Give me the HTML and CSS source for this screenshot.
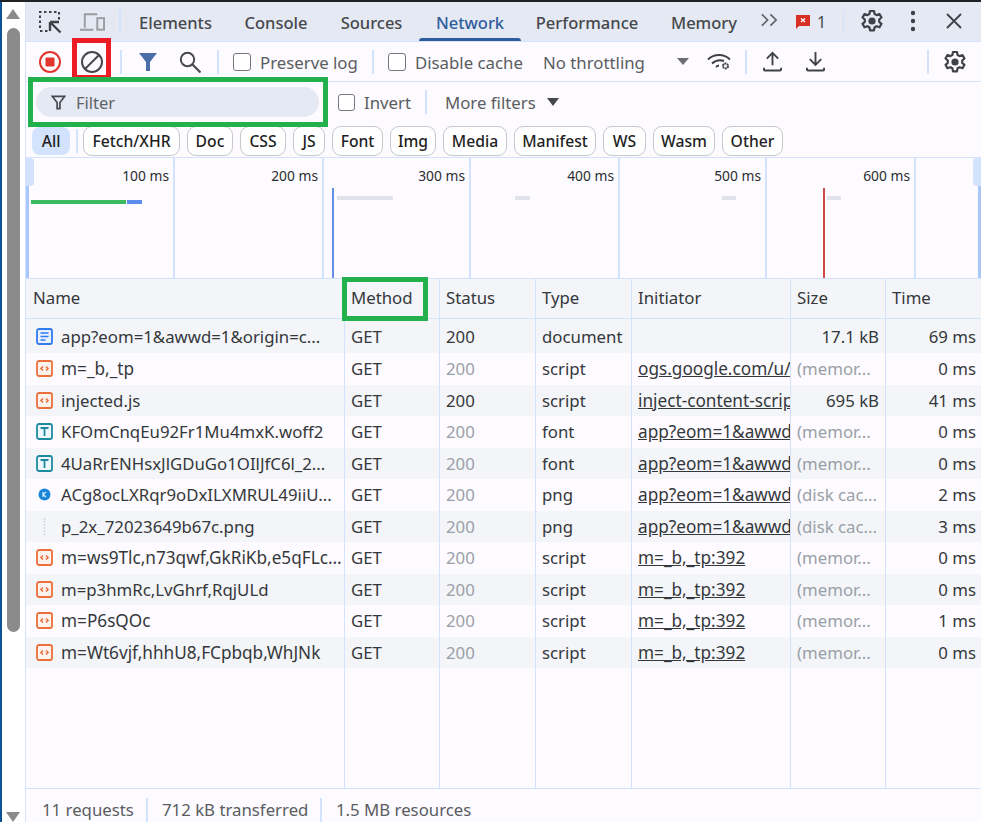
FILE: index.html
```html
<!DOCTYPE html>
<html lang="en">
<head>
<meta charset="utf-8">
<title>DevTools Network</title>
<link rel="stylesheet" href="styles.css">
</head>
<body>
<svg class="defs" width="0" height="0">
  <symbol id="gear" viewBox="0 0 24 24"><path fill="none" stroke="currentColor" stroke-width="2.2" stroke-linejoin="round" d="M10 2h4l.6 3 2 1.1 2.9-1 2 3.4-2.3 2v2.3l2.3 2-2 3.4-2.9-1-2 1.100-.6 3h-4l-.6-3-2-1.100-2.900 1-2-3.400 2.300-2v-2.300l-2.300-2 2-3.400 2.900 1 2-1.100z"/><circle cx="12" cy="12" r="3.600" fill="currentColor"/></symbol>
  <symbol id="script" viewBox="0 0 17 17"><rect x="1" y="1" width="15" height="15" rx="2" fill="#fdf3ee" stroke="#ea6f3a" stroke-width="1.800"/><path fill="none" stroke="#ea6f3a" stroke-width="1.600" d="M7 6.500 5 8.500l2 2M10 6.500l2 2-2 2"/></symbol>
  <symbol id="font" viewBox="0 0 17 17"><rect x="1" y="1" width="15" height="15" rx="2" fill="#eef8fa" stroke="#1d8aa0" stroke-width="1.800"/><path fill="none" stroke="#1d8aa0" stroke-width="1.800" d="M4.500 5h8M8.500 5v8"/></symbol>
</svg>
<div class="app">
  <aside class="rail">
    <span class="arrow-up"></span>
    <span class="thumb"></span>
    <span class="arrow-down"></span>
  </aside>
  <main class="panel">
    <nav class="tabbar">
      <svg class="ic ic-inspect" viewBox="0 0 24 24"><path fill="none" stroke="#3f4246" stroke-width="2" stroke-dasharray="2.500 2.500" d="M2 18V2h19v8M2 21h8"/><path fill="none" stroke="#3f4246" stroke-width="2.400" d="M12 12h9M12 12v9M12.500 12.500l10 10"/></svg>
      <svg class="ic ic-device" viewBox="0 0 26 20"><path fill="none" stroke="#9a9c9f" stroke-width="2" d="M5 16V2h13M0 18h14"/><rect x="18" y="6" width="7" height="12" fill="none" stroke="#9a9c9f" stroke-width="2"/></svg>
      <span class="sep sep-tab"></span>
      <a class="tab tab-el">Elements</a>
      <a class="tab tab-co">Console</a>
      <a class="tab tab-so">Sources</a>
      <a class="tab tab-net">Network</a>
      <a class="tab tab-pe">Performance</a>
      <a class="tab tab-me">Memory</a>
      <svg class="ic ic-more" viewBox="0 0 20 14"><path fill="none" stroke="#5f6368" stroke-width="1.800" d="m2 1 6 6-6 6M11 1l6 6-6 6"/></svg>
      <svg class="ic ic-err" viewBox="0 0 16 16"><path fill="#d93025" d="M1 1h14v11H4l-3 3z"/><path stroke="#fff" stroke-width="1.300" d="m6 4.500 4 3.500m0-3.500L6 8"/></svg>
      <span class="err-count">1</span>
      <span class="sep sep-err"></span>
      <svg class="ic ic-gear1"><use href="#gear"/></svg>
      <svg class="ic ic-dots" viewBox="0 0 6 22"><circle cx="3" cy="3" r="2.200" fill="#3f4246"/><circle cx="3" cy="11" r="2.200" fill="#3f4246"/><circle cx="3" cy="19" r="2.200" fill="#3f4246"/></svg>
      <svg class="ic ic-close" viewBox="0 0 16 16"><path stroke="#3f4246" stroke-width="1.800" d="m1 1 14 14M15 1 1 15"/></svg>
    </nav>
    <div class="toolbar">
      <svg class="ic ic-rec" viewBox="0 0 22 22"><circle cx="11" cy="11" r="10" fill="none" stroke="#e2352d" stroke-width="2"/><rect x="6.500" y="6.500" width="9" height="9" rx="1" fill="#e2352d"/></svg>
      <svg class="ic ic-clear" viewBox="0 0 22 22"><circle cx="11" cy="11" r="10" fill="none" stroke="#46484c" stroke-width="2"/><path stroke="#46484c" stroke-width="2" d="M18 4 4 18"/></svg>
      <span class="sep sep-a"></span>
      <svg class="ic ic-funnel" viewBox="0 0 20 20"><path fill="#4b6ea8" d="M1 1h18l-7 9v9H8v-9z"/></svg>
      <svg class="ic ic-search" viewBox="0 0 22 22"><circle cx="8.500" cy="8.500" r="6.700" fill="none" stroke="#46484c" stroke-width="2"/><path stroke="#46484c" stroke-width="2.200" d="m13.500 13.500 8 8"/></svg>
      <span class="sep sep-b"></span>
      <span class="check check-pl"></span>
      <span class="lbl lbl-pl">Preserve log</span>
      <span class="sep sep-c"></span>
      <span class="check check-dc"></span>
      <span class="lbl lbl-dc">Disable cache</span>
      <span class="lbl lbl-nt">No throttling</span>
      <span class="tri tri-grey"></span>
      <svg class="ic ic-wifi" viewBox="0 0 24 18"><path fill="none" stroke="#3f4246" stroke-width="2" d="M1 6.500C7 .5 17 .5 23 6.500M5 10.500c3-3 8-4 12-2.500M9 14c1-1 2-1.500 3-1.500"/><circle cx="18.500" cy="13" r="2.500" fill="none" stroke="#3f4246" stroke-width="2" stroke-dasharray="2 .6"/></svg>
      <span class="sep sep-d"></span>
      <svg class="ic ic-up" viewBox="0 0 20 22"><path fill="none" stroke="#3f4246" stroke-width="2" d="M10 15V2M4 8l6-6 6 6M1 17.500v2a1 1 0 0 0 1 1h16a1 1 0 0 0 1-1v-2"/></svg>
      <svg class="ic ic-down" viewBox="0 0 20 22"><path fill="none" stroke="#3f4246" stroke-width="2" d="M10 1v13M4 8.500l6 6 6-6M1 17.500v2a1 1 0 0 0 1 1h16a1 1 0 0 0 1-1v-2"/></svg>
      <span class="sep sep-e"></span>
      <svg class="ic ic-gear2"><use href="#gear"/></svg>
    </div>
    <div class="filterbar">
      <div class="filterbox">
        <svg class="ic ic-ffunnel" viewBox="0 0 16 16"><path fill="none" stroke="#46484c" stroke-width="1.800" d="M1.500 1.500h13L9.500 8v6.500h-3V8z"/></svg>
        <span class="placeholder">Filter</span>
      </div>
      <span class="check check-inv"></span>
      <span class="lbl lbl-inv">Invert</span>
      <span class="sep sep-f"></span>
      <span class="lbl lbl-mf">More filters</span>
      <span class="tri tri-dark"></span>
    </div>
    <div class="chips">
      <span class="chip chip-all">All</span>
      <span class="sep sep-chip"></span>
      <span class="chip w-97">Fetch/XHR</span>
      <span class="chip w-46">Doc</span>
      <span class="chip w-46">CSS</span>
      <span class="chip w-32">JS</span>
      <span class="chip w-51">Font</span>
      <span class="chip w-46">Img</span>
      <span class="chip w-64">Media</span>
      <span class="chip w-82">Manifest</span>
      <span class="chip w-43">WS</span>
      <span class="chip w-62">Wasm</span>
      <span class="chip w-61">Other</span>
    </div>
    <section class="overview">
      <div class="ov-col"><span>100 ms</span></div>
      <div class="ov-col"><span>200 ms</span></div>
      <div class="ov-col"><span>300 ms</span></div>
      <div class="ov-col"><span>400 ms</span></div>
      <div class="ov-col"><span>500 ms</span></div>
      <div class="ov-col"><span>600 ms</span></div>
      <i class="mark bar-green"></i>
      <i class="mark bar-blue"></i>
      <i class="mark dash d1"></i>
      <i class="mark dash d2"></i>
      <i class="mark dash d3"></i>
      <i class="mark dash d4"></i>
      <i class="mark line-blue"></i>
      <i class="mark line-red"></i>
      <i class="mark edge edge-l"></i>
      <i class="mark edge edge-r"></i>
      <i class="mark handle handle-l"></i>
      <i class="mark handle handle-r"></i>
    </section>
    <section class="table">
      <div class="row head"><div>Name</div><div>Method</div><div>Status</div><div>Type</div><div>Initiator</div><div>Size</div><div>Time</div></div>
      <div class="row first alt"><div class="name"><svg class="ri" viewBox="0 0 17 17"><rect x="1" y="1" width="15" height="15" rx="2" fill="#e8f0fe" stroke="#2f7bf0" stroke-width="1.800"/><path stroke="#2f7bf0" stroke-width="1.500" d="M4.500 5h8M4.500 8.500h8M4.500 12h5"/></svg>app?eom=1&amp;awwd=1&amp;origin=c...</div><div>GET</div><div>200</div><div>document</div><div></div><div class="num">17.1 kB</div><div class="num">69 ms</div></div>
      <div class="row"><div class="name wide"><svg class="ri"><use href="#script"/></svg>m=_b,_tp</div><div>GET</div><div class="mute">200</div><div>script</div><div class="link">ogs.google.com/u/0</div><div class="mute">(memor...</div><div class="num">0 ms</div></div>
      <div class="row alt"><div class="name"><svg class="ri"><use href="#script"/></svg>injected.js</div><div>GET</div><div>200</div><div>script</div><div class="link">inject-content-script</div><div class="num">695 kB</div><div class="num">41 ms</div></div>
      <div class="row"><div class="name"><svg class="ri"><use href="#font"/></svg>KFOmCnqEu92Fr1Mu4mxK.woff2</div><div>GET</div><div class="mute">200</div><div>font</div><div class="link">app?eom=1&amp;awwd</div><div class="mute">(memor...</div><div class="num">0 ms</div></div>
      <div class="row alt"><div class="name"><svg class="ri"><use href="#font"/></svg>4UaRrENHsxJlGDuGo1OIlJfC6l_2...</div><div>GET</div><div class="mute">200</div><div>font</div><div class="link">app?eom=1&amp;awwd</div><div class="mute">(memor...</div><div class="num">0 ms</div></div>
      <div class="row"><div class="name"><svg class="ri" viewBox="0 0 17 17"><circle cx="8.500" cy="8.500" r="6" fill="#1a86d8"/><path fill="none" stroke="#dcefff" stroke-width="1.200" d="M7 6v5M10 6 7 8.500l3 2.500"/></svg>ACg8ocLXRqr9oDxILXMRUL49iiU...</div><div>GET</div><div class="mute">200</div><div>png</div><div class="link">app?eom=1&amp;awwd</div><div class="mute">(disk cac...</div><div class="num">2 ms</div></div>
      <div class="row alt"><div class="name"><svg class="ri" viewBox="0 0 17 17"><path stroke="#d5d8e4" stroke-width="1.500" stroke-dasharray="2 1" d="M8.500 0v18"/></svg>p_2x_72023649b67c.png</div><div>GET</div><div class="mute">200</div><div>png</div><div class="link">app?eom=1&amp;awwd</div><div class="mute">(disk cac...</div><div class="num">3 ms</div></div>
      <div class="row"><div class="name wide"><svg class="ri"><use href="#script"/></svg>m=ws9Tlc,n73qwf,GkRiKb,e5qFLc...</div><div>GET</div><div class="mute">200</div><div>script</div><div class="link">m=_b,_tp:392</div><div class="mute">(memor...</div><div class="num">0 ms</div></div>
      <div class="row alt"><div class="name"><svg class="ri"><use href="#script"/></svg>m=p3hmRc,LvGhrf,RqjULd</div><div>GET</div><div class="mute">200</div><div>script</div><div class="link">m=_b,_tp:392</div><div class="mute">(memor...</div><div class="num">0 ms</div></div>
      <div class="row"><div class="name wide"><svg class="ri"><use href="#script"/></svg>m=P6sQOc</div><div>GET</div><div class="mute">200</div><div>script</div><div class="link">m=_b,_tp:392</div><div class="mute">(memor...</div><div class="num">1 ms</div></div>
      <div class="row alt"><div class="name wide"><svg class="ri"><use href="#script"/></svg>m=Wt6vjf,hhhU8,FCpbqb,WhJNk</div><div>GET</div><div class="mute">200</div><div>script</div><div class="link">m=_b,_tp:392</div><div class="mute">(memor...</div><div class="num">0 ms</div></div>
      <div class="row filler"><div></div><div></div><div></div><div></div><div></div><div></div><div></div></div>
    </section>
    <footer class="status">
      <span class="st st-a">11 requests</span>
      <span class="sep st-sep"></span>
      <span class="st st-b">712 kB transferred</span>
      <span class="sep st-sep"></span>
      <span class="st">1.5 MB resources</span>
    </footer>
  </main>
</div>
<span class="note note-red"></span>
<span class="note note-filter"></span>
<span class="note note-method"></span>
</body>
</html>
```
FILE: styles.css
```css
* { box-sizing: border-box; }
html, body { margin: 0; height: 100%; }
body {
  position: relative;
  width: 981px;
  height: 822px;
  overflow: hidden;
  background: #fdfbff;
  font-family: "Noto Sans", "Open Sans", sans-serif;
  font-size: 16.8px;
  color: #35383b;
  border-top: 2px solid #202124;
}
.defs { position: absolute; }
.app { display: flex; height: 820px; }
.rail {
  position: relative;
  flex: 0 0 26px;
  background: #fff;
  border-left: 2px solid #0f5299;
  border-right: 1px solid #d3e3fd;
}
.thumb { position: absolute; left: 5px; top: 26px; width: 13px; height: 604px; background: #8b8b8b; border-radius: 7px; }
.arrow-up, .arrow-down { position: absolute; left: 4px; width: 0; height: 0; border-left: 7.500px solid transparent; border-right: 7.500px solid transparent; }
.arrow-up { top: 7px; border-bottom: 10px solid #8b8b8b; }
.arrow-down { top: 810px; border-top: 10px solid #8b8b8b; }

.panel { flex: 1; min-width: 0; display: flex; flex-direction: column; }
.ic { display: block; flex: none; }
.sep { display: block; flex: none; width: 2px; height: 24px; background: #d3e3fd; }

/* Tabs */
.tabbar { display: flex; align-items: center; height: 40px; background: #e5e9f3; border-bottom: 1px solid #d3e3fd; flex: none; }
.ic-inspect { width: 24px; height: 24px; margin-left: 12px; }
.ic-device { width: 25px; height: 20px; margin-left: 18px; }
.sep-tab { margin-left: 14px; margin-right: 2px; }
.tab { display: flex; align-items: center; justify-content: center; height: 39px; padding-top: 2px; font-weight: 500; font-size: 16.500px; color: #45484c; white-space: nowrap; }
.tab-el { width: 105px; }
.tab-co { width: 96px; }
.tab-so { width: 95px; }
.tab-net { width: 102px; color: #2f5c9e; position: relative; }
.tab-net::after { content: ""; position: absolute; left: 0; right: 0; bottom: 0; height: 3px; background: #2f5c9e; border-radius: 3px 3px 0 0; }
.tab-pe { width: 132px; }
.tab-me { width: 102px; }
.ic-more { width: 19px; height: 14px; margin-left: 5px; margin-top: -3px; }
.ic-err { width: 16px; height: 16px; margin-left: 16px; }
.err-count { margin-left: 6px; width: 10px; font-size: 16px; color: #45484c; }
.sep-err { width: 1px; height: 24px; margin-left: 16px; }
.ic-gear1 { width: 24px; height: 24px; margin-left: 16px; color: #3f4246; margin-top: -2px; }
.ic-dots { width: 6px; height: 22px; margin-left: 26px; margin-top: -2px; }
.ic-close { width: 16px; height: 16px; margin-left: 30px; margin-top: -2px; }

/* Toolbar */
.toolbar { display: flex; align-items: center; height: 40px; border-bottom: 1px solid #d3e3fd; flex: none; }
.toolbar .lbl { padding-top: 2px; }
.ic-rec { width: 22px; height: 22px; margin-left: 13px; }
.ic-clear { width: 22px; height: 22px; margin-left: 20px; }
.sep-a { margin-left: 17px; }
.ic-funnel { width: 20px; height: 20px; margin-left: 16px; }
.ic-search { width: 22px; height: 22px; margin-left: 21px; }
.sep-b { margin-left: 16px; }
.check { display: block; flex: none; width: 18px; height: 18px; border: 1.500px solid #74777b; border-radius: 3px; background: #fff; }
.check-pl { margin-left: 14px; }
.lbl { flex: none; color: #5a5d61; white-space: nowrap; }
.lbl-pl { width: 97px; margin-left: 9px; }
.sep-c { margin-left: 15px; }
.check-dc { margin-left: 14px; }
.lbl-dc { width: 108px; margin-left: 9px; }
.lbl-nt { width: 103px; margin-left: 20px; }
.tri { display: block; flex: none; width: 0; height: 0; border-left: 6px solid transparent; border-right: 6px solid transparent; }
.tri-grey { border-top: 7px solid #6b6e72; margin-left: 31px; }
.ic-wifi { width: 24px; height: 18px; margin-left: 18px; }
.sep-d { margin-left: 14px; }
.ic-up { width: 19px; height: 21px; margin-left: 16px; }
.ic-down { width: 19px; height: 21px; margin-left: 24px; }
.sep-e { margin-left: 102px; }
.ic-gear2 { width: 24px; height: 24px; margin-left: 14px; color: #3f4246; }

/* Filter */
.filterbar { display: flex; align-items: center; height: 43px; padding-bottom: 3px; flex: none; }
.filterbox { display: flex; align-items: center; width: 283px; height: 30px; margin-left: 10px; background: #e5e9f3; border-radius: 15px; }
.ic-ffunnel { width: 15px; height: 15px; margin-left: 15px; }
.placeholder { margin-left: 10px; font-size: 16.500px; color: #5f6368; }
.check-inv { width: 17px; height: 17px; margin-left: 19px; }
.lbl-inv { width: 45px; margin-left: 9px; }
.sep-f { margin-left: 16px; }
.lbl-mf { width: 92px; margin-left: 18px; }
.tri-dark { border-top: 8px solid #45484c; margin-left: 10px; }

/* Chips */
.chips { display: flex; align-items: center; gap: 7px; height: 33px; flex: none; padding-left: 6px; border-bottom: 1px solid #d3e3fd; font-size: 15.700px; font-weight: 500; color: #1f1f1f; }
.chip { flex: none; display: flex; align-items: center; justify-content: center; height: 30px; border: 1px solid #c6c8cc; border-radius: 9px; background: #fff; white-space: nowrap; }
.chip-all { width: 38px; height: 28px; background: #d3e3fd; border: 0; border-radius: 8px; }
.sep-chip { height: 24px; margin: 0 -2px 0 -1px; }
.w-97 { width: 97px; } .w-46 { width: 46px; } .w-32 { width: 32px; } .w-51 { width: 51px; }
.w-64 { width: 64px; } .w-82 { width: 82px; } .w-43 { width: 43px; }
.w-62 { width: 62px; } .w-61 { width: 61px; }

/* Overview */
.overview { position: relative; display: grid; grid-template-columns: 149px 149px 147px 149px 147px 149px; height: 120px; flex: none; font-size: 13.800px; color: #2b2d30; }
.ov-col { border-right: 2px solid #d3e3fd; padding: 8px 4px 0 0; text-align: right; }
.mark { position: absolute; display: block; }
.bar-green { left: 5px; top: 42px; width: 95px; height: 4px; background: #3cba5f; }
.bar-blue { left: 101px; top: 42px; width: 15px; height: 4px; background: #5b8def; }
.dash { top: 38px; height: 3.500px; background: #e0e3ea; }
.d1 { left: 311px; width: 56px; }
.d2 { left: 489px; width: 15px; }
.d3 { left: 696px; width: 14px; }
.d4 { left: 801px; width: 14px; }
.line-blue { left: 306px; top: 30px; width: 2px; height: 90px; background: #5f8fe6; }
.line-red { left: 797px; top: 30px; width: 2px; height: 90px; background: #d04a4a; }
.edge { top: 0; width: 3px; height: 120px; background: #a9c7fa; }
.edge-l { left: 0; }
.edge-r { right: 0; }
.handle { top: 0; width: 8px; height: 28px; background: #d3e3fd; }
.handle-l { left: 0; border-radius: 0 4px 4px 0; }
.handle-r { right: 0; border-radius: 4px 0 0 4px; }

/* Table */
.table { flex: 1; min-height: 0; display: flex; flex-direction: column; }
.row { display: grid; grid-template-columns: 319px 95px 96px 96px 159px 95px 95px; height: 31.500px; flex: none; white-space: nowrap; }
.row > div { display: flex; align-items: center; padding: 0 6px; overflow: hidden; border-right: 1px solid #d3e3fd; min-width: 0; }
.row > div:last-child { border-right: 0; padding-right: 5px; }
.alt { background: #f3f5f9; }
.head { height: 41px; background: #f3f5f9; border-top: 1px solid #d3e3fd; border-bottom: 1px solid #d3e3fd; }
.row.head > div { padding-bottom: 2px; }
.row.head > div:first-child { padding-left: 7px; }
.first { height: 34px; }
.row > .name { padding-left: 10px; }
.row > .wide { font-size: 17.200px; }
.ri { width: 17px; height: 17px; flex: none; margin-right: 8px; }
.row > .num { justify-content: flex-end; }
.row > .mute { color: #9aa0a6; }
.row > .link { font-size: 17.200px; text-decoration: underline; }
.filler { flex: 1; height: auto; min-height: 0; }

/* Status */
.status { display: flex; align-items: center; height: 34px; padding-top: 8px; flex: none; border-top: 1px solid #d3e3fd; padding-left: 16px; color: #5a5d61; }
.st-a, .st-b { white-space: nowrap; }
.st-a { width: 90px; }
.st-b { width: 144px; }
.st-sep { margin: 0 14px; height: 24px; }

/* Annotation boxes */
.note { position: absolute; display: block; pointer-events: none; }
.note-red { left: 72px; top: 36px; width: 39px; height: 42px; border: 5px solid #ed1c24; }
.note-filter { left: 28px; top: 75px; width: 300px; height: 50px; border: 5px solid #22b14c; }
.note-method { left: 342px; top: 275px; width: 86px; height: 44px; border: 5px solid #22b14c; }
```
